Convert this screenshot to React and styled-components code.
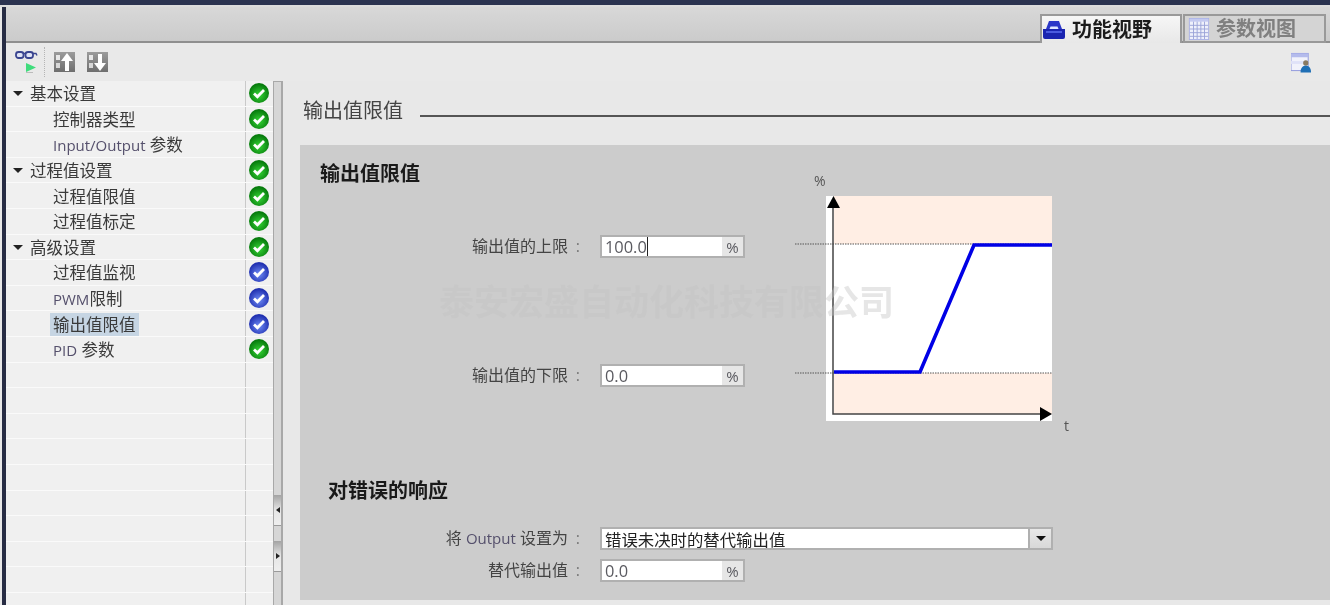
import React from 'react';
import styled, { createGlobalStyle } from 'styled-components';

const CJK = '"Open Sans", "Noto Sans CJK SC", sans-serif';

const GlobalStyle = createGlobalStyle`
  html, body {
    margin: 0;
    padding: 0;
    background: #e8e8e8;
    overflow: hidden;
  }
`;

const Root = styled.div`
  position: relative;
  width: 1330px;
  height: 605px;
  overflow: hidden;
  display: flex;
  flex-direction: column;
  background: #e8e8e8;
  font-family: ${CJK};
  color: #3a3a3a;
  filter: blur(0.4px);
`;

const TopBar = styled.div`
  height: 5px;
  flex: none;
  background: #2b3350;
  border-bottom: 2px solid #dcdcdc;
`;

const Frame = styled.div`
  flex: 1;
  min-height: 0;
  display: flex;
  flex-direction: column;
  margin-left: 2px;
  border-left: 4px solid #272c44;
`;

const TabStrip = styled.div`
  height: 36px;
  flex: none;
  box-sizing: border-box;
  display: flex;
  justify-content: flex-end;
  align-items: flex-end;
  padding-right: 4px;
  gap: 1px;
  background: linear-gradient(#d8d8d8, #cbcbcb);
  border-bottom: 2px solid #8f8f8f;
`;

const Tab = styled.div`
  width: ${(p) => (p.$active ? 142 : 143)}px;
  height: 29px;
  box-sizing: border-box;
  display: flex;
  align-items: center;
  gap: 6px;
  padding-left: ${(p) => (p.$active ? 1 : 3)}px;
  margin-bottom: -2px;
  border: 2px solid #999;
  border-bottom: ${(p) => (p.$active ? 'none' : '2px solid #999')};
  background: ${(p) => (p.$active ? 'linear-gradient(#f6f6f6, #e8e8e8)' : '#d4d4d4')};
  color: ${(p) => (p.$active ? '#1c1c1c' : '#808080')};
  font-size: 20px;
  font-weight: 700;
  line-height: 24px;
`;

const Toolbar = styled.div`
  height: 38px;
  flex: none;
  display: flex;
  align-items: center;
  padding: 0 18px 0 9px;
  background: #e9e9e9;
`;

const ToolSeparator = styled.div`
  width: 0;
  height: 30px;
  margin: 0 9px 0 6px;
  border-left: 1px dotted #b5b5b5;
`;

const ToolGap = styled.div`
  width: ${(p) => p.$width}px;
`;

const ToolSpacer = styled.div`
  flex: 1;
`;

const Body = styled.div`
  flex: 1;
  min-height: 0;
  display: flex;
`;

const NavList = styled.div`
  width: 267px;
  flex: none;
  overflow: hidden;
`;

const NavRow = styled.div`
  height: 25.6px;
  box-sizing: border-box;
  display: flex;
  align-items: center;
  background: #f0f0f0;
  border-bottom: 1.5px solid #fafafa;
`;

const NavLabel = styled.div`
  width: 240px;
  height: 100%;
  box-sizing: border-box;
  flex: none;
  display: flex;
  align-items: center;
  padding-top: 1px;
  padding-left: ${(p) => (p.$child ? 47 : 7)}px;
  border-right: 1px solid #c9c9c9;
  font-size: 16.5px;
  white-space: pre;
`;

const NavText = styled.span`
  padding: 0 3px;
  margin-left: -3px;
  line-height: 23px;
  background: ${(p) => (p.$selected ? '#c6d5e3' : 'transparent')};
`;

const Latin = styled.span`
  color: #55506c;
  font-size: 15px;
`;

const Caret = styled.span`
  width: 0;
  height: 0;
  margin-right: 7px;
  border-left: 5px solid transparent;
  border-right: 5px solid transparent;
  border-top: 5px solid #222;
`;

const StatusCell = styled.div`
  flex: 1;
  display: flex;
  justify-content: center;
  margin-left: -2px;
`;

const Splitter = styled.div`
  width: 10px;
  height: 100%;
  flex: none;
  box-sizing: border-box;
  display: flex;
  flex-direction: column;
  gap: 15px;
  padding-top: 413px;
  background: #d6d6d6;
  border-top: 1px solid #a8a8a8;
  border-left: 1px solid #a8a8a8;
  border-right: 2px solid #a8a8a8;
`;

const SplitButton = styled.div`
  height: 31px;
  box-sizing: border-box;
  display: flex;
  align-items: center;
  justify-content: center;
  background: linear-gradient(#a3a3a3, #e6e6e6 50%, #eeeeee);
  border-bottom: 1px solid #9a9a9a;
`;

const SplitArrow = styled.span`
  width: 0;
  height: 0;
  border-top: 3.5px solid transparent;
  border-bottom: 3.5px solid transparent;
  ${(p) => (p.$left ? 'border-right: 4px solid #222;' : 'border-left: 4px solid #222;')}
`;

const Content = styled.div`
  flex: 1;
  min-width: 0;
  padding: 16px 0 0 17px;
`;

const TitleRow = styled.div`
  display: flex;
  align-items: center;
  height: 28px;
  margin-bottom: 20px;
  margin-left: 3px;
`;

const PageTitle = styled.div`
  font-size: 20px;
  line-height: 28px;
  color: #444;
`;

const TitleRule = styled.div`
  flex: 1;
  height: 2px;
  margin: 10px 0 0 17px;
  background: #555;
`;

const Panel = styled.div`
  height: 455px;
  box-sizing: border-box;
  padding-top: 16px;
  background: #cccccc;
`;

const UpperSection = styled.div`
  display: flex;
  height: 317px;
`;

const FormColumn = styled.div`
  width: 485px;
  flex: none;
`;

const Heading = styled.div`
  margin-left: ${(p) => p.$left}px;
  font-size: 20px;
  font-weight: 700;
  line-height: 26px;
  color: #1a1a1a;
`;

const FieldRow = styled.div`
  display: grid;
  grid-template-columns: 283px auto;
  column-gap: 17px;
  align-items: center;
  margin-top: ${(p) => p.$top}px;
`;

const FieldLabel = styled.div`
  text-align: right;
  font-size: 16px;
  line-height: 23px;
  white-space: pre;
  color: #444;
`;

const Colon = styled.span`
  display: inline-block;
  width: 15px;
  box-sizing: border-box;
  padding-right: 3px;
  text-align: right;
  color: #777;
`;

const InputBox = styled.div`
  width: ${(p) => p.$width}px;
  height: 23px;
  box-sizing: border-box;
  display: flex;
  align-items: stretch;
  background: #fff;
  border: 2px solid #b0b0b0;
  font-size: 16.4px;
  color: #5a5a60;
`;

const InputValue = styled.div`
  flex: 1;
  display: flex;
  align-items: center;
  padding-left: 3px;
  white-space: pre;
  color: ${(p) => (p.$dark ? '#222' : 'inherit')};
`;

const TextCaret = styled.span`
  width: 1px;
  height: 19px;
  background: #222;
`;

const Unit = styled.div`
  width: 21px;
  display: flex;
  align-items: center;
  justify-content: center;
  background: #e6e6e6;
  font-size: 15px;
`;

const DropButton = styled.div`
  width: 21px;
  display: flex;
  align-items: center;
  justify-content: center;
  background: linear-gradient(#e8e8e8, #d8d8d8);
  border-left: 2px solid #b0b0b0;
`;

const DropArrow = styled.span`
  width: 0;
  height: 0;
  border-left: 5px solid transparent;
  border-right: 5px solid transparent;
  border-top: 5px solid #111;
`;

const Chart = styled.svg`
  display: block;
  flex: none;
  margin-top: 9px;
`;

const Watermark = styled.div`
  position: absolute;
  left: 439px;
  top: 278px;
  font-size: 35px;
  line-height: 48px;
  font-weight: 700;
  white-space: nowrap;
  color: rgba(196, 196, 196, 0.42);
  pointer-events: none;
`;

const StatusIcon = ({ kind }) => {
  const id = `status-${kind}`;
  const colors = kind === 'green' ? ['#36d636', '#067a0c'] : ['#6f8cf5', '#1f2fb0'];
  return (
    <svg width="22" height="22" viewBox="0 0 22 22">
      <defs>
        <radialGradient id={id} cx="0.5" cy="0.6" r="0.55">
          <stop offset="0" stopColor={colors[0]} />
          <stop offset="1" stopColor={colors[1]} />
        </radialGradient>
      </defs>
      <circle cx="11" cy="11" r="10" fill={`url(#${id})`} />
      <path d="M6 11.5l3.4 3.2L16 8" fill="none" stroke="#fff" strokeWidth="2.8" />
    </svg>
  );
};

const GlassesIcon = () => (
  <svg width="23" height="25" viewBox="0 0 23 25">
    <rect x="1" y="2" width="7.500" height="6" rx="2.500" fill="#dfe3f5" stroke="#3a4590" strokeWidth="1.800" />
    <rect x="10.500" y="2" width="7.500" height="6" rx="2.500" fill="#dfe3f5" stroke="#3a4590" strokeWidth="1.800" />
    <path d="M8.500 3.500h2M18 3.500h3l1 2" fill="none" stroke="#3a4590" strokeWidth="1.400" />
    <path d="M11 13l10 4.500-10 4.500z" fill="#3fdc7c" />
    <path d="M11 22.500h7" stroke="#bbb" strokeWidth="1" />
  </svg>
);

const MoveIcon = ({ down }) => (
  <svg width="22" height="21" viewBox="0 0 22 21">
    <defs>
      <linearGradient id="move-fill" x1="0" y1="0" x2="0" y2="1">
        <stop offset="0" stopColor="#9c9c9c" />
        <stop offset="1" stopColor="#6e6e6e" />
      </linearGradient>
    </defs>
    <rect x="0" y="0" width="21" height="20" fill="url(#move-fill)" />
    <rect x="2" y="3" width="4" height="5" fill="#e8e8e8" />
    <rect x="2" y="11" width="4" height="5" fill="#d8d8d8" />
    {down ? (
      <path d="M11 2h4v9h4l-6 8-6-8h4z" fill="#fff" />
    ) : (
      <path d="M13 1l6 8h-4v10h-4V9H7z" fill="#fff" />
    )}
  </svg>
);

const TableIcon = () => (
  <svg width="21" height="21" viewBox="0 0 22 21">
    <rect x="0" y="1" width="18" height="18" fill="#f1f2fb" stroke="#8e97dc" />
    <rect x="0" y="1" width="18" height="4" fill="#b4bbec" />
    <rect x="0" y="9" width="18" height="3" fill="#dfe2f8" />
    <circle cx="15.500" cy="11" r="2.800" fill="#8a7a62" />
    <path d="M10 21c0-5 2.500-7 5.500-7s5.500 2 5.500 7z" fill="#1f6fb5" />
  </svg>
);

const FunctionIcon = () => (
  <svg width="23" height="18" viewBox="0 0 23 18">
    <path d="M6 0h10l3 8H3z" fill="#2b37c8" />
    <path d="M7.500 5.500h7l1 2.500h-9z" fill="#dfe6ff" />
    <path d="M0 8h22v8q0 2-2 2H2q-2 0-2-2z" fill="#1a24b0" />
    <path d="M3 10h16v2H3z" fill="#4a5ae0" />
  </svg>
);

const ParamIcon = () => (
  <svg width="22" height="22" viewBox="0 0 22 24">
    <rect x="0.500" y="0.500" width="21" height="23" fill="#eef0fb" stroke="#aab2e6" />
    <rect x="1" y="1" width="20" height="3" fill="#c3c9f0" />
    <path d="M5 4v19M9 4v19M13 4v19M17 4v19M1 8h20M1 12h20M1 16h20M1 20h20" stroke="#9aa3d8" strokeWidth="1" fill="none" />
  </svg>
);

// drawn in page coordinates, the viewBox starts at the chart's page position
const LimitChart = () => (
  <Chart width="295" height="265" viewBox="785 170 295 265">
    <text x="814" y="186" fontSize="14" fill="#555" fontFamily='"Open Sans", sans-serif'>%</text>
    <rect x="826" y="196" width="226" height="225" fill="#fff" />
    <rect x="834" y="196" width="218" height="48" fill="#ffeee4" />
    <rect x="834" y="373" width="218" height="41" fill="#ffeee4" />
    <path d="M795 244h257M795 373h257" stroke="#555" strokeWidth="1" strokeDasharray="1.500 1" fill="none" />
    <path d="M834 372h86l54-127h78" stroke="#0000e6" strokeWidth="3.600" fill="none" />
    <path d="M833 204v210h210" stroke="#444" strokeWidth="1.500" fill="none" />
    <path d="M827 208l6.500-12 6.500 12z" fill="#000" />
    <path d="M1040 407l12 7-12 7z" fill="#000" />
    <text x="1064" y="431" fontSize="14" fill="#555" fontFamily='"Open Sans", sans-serif'>t</text>
  </Chart>
);

const navItems = [
  { label: '基本设置', status: 'green' },
  { label: '控制器类型', child: true, status: 'green' },
  { latin: 'Input/Output', label: ' 参数', child: true, status: 'green' },
  { label: '过程值设置', status: 'green' },
  { label: '过程值限值', child: true, status: 'green' },
  { label: '过程值标定', child: true, status: 'green' },
  { label: '高级设置', status: 'green' },
  { label: '过程值监视', child: true, status: 'blue' },
  { latin: 'PWM', label: '限制', child: true, status: 'blue' },
  { label: '输出值限值', child: true, status: 'blue', selected: true },
  { latin: 'PID', label: ' 参数', child: true, status: 'green' },
  ...Array.from({ length: 10 }, () => ({ label: '' })),
];

const App = () => (
  <Root>
    <GlobalStyle />
    <TopBar />
    <Frame>
      <TabStrip>
        <Tab $active>
          <FunctionIcon />
          功能视野
        </Tab>
        <Tab>
          <ParamIcon />
          参数视图
        </Tab>
      </TabStrip>

      <Toolbar>
        <GlassesIcon />
        <ToolSeparator />
        <MoveIcon />
        <ToolGap $width={11} />
        <MoveIcon down />
        <ToolSpacer />
        <TableIcon />
      </Toolbar>

      <Body>
        <NavList>
          {navItems.map((item, i) => (
            <NavRow key={i}>
              <NavLabel $child={item.child}>
                {item.label && !item.child && <Caret />}
                <NavText $selected={item.selected}>
                  {item.latin && <Latin>{item.latin}</Latin>}
                  {item.label}
                </NavText>
              </NavLabel>
              <StatusCell>{item.status && <StatusIcon kind={item.status} />}</StatusCell>
            </NavRow>
          ))}
        </NavList>

        <Splitter>
          <SplitButton>
            <SplitArrow $left />
          </SplitButton>
          <SplitButton>
            <SplitArrow />
          </SplitButton>
        </Splitter>

        <Content>
          <TitleRow>
            <PageTitle>输出值限值</PageTitle>
            <TitleRule />
          </TitleRow>

          <Panel>
            <UpperSection>
              <FormColumn>
                <Heading $left={20}>输出值限值</Heading>
                <FieldRow $top={48}>
                  <FieldLabel>输出值的上限<Colon>:</Colon></FieldLabel>
                  <InputBox $width={145}>
                    <InputValue>
                      100.0
                      <TextCaret />
                    </InputValue>
                    <Unit>%</Unit>
                  </InputBox>
                </FieldRow>
                <FieldRow $top={106}>
                  <FieldLabel>输出值的下限<Colon>:</Colon></FieldLabel>
                  <InputBox $width={145}>
                    <InputValue>0.0</InputValue>
                    <Unit>%</Unit>
                  </InputBox>
                </FieldRow>
              </FormColumn>
              <LimitChart />
            </UpperSection>

            <Heading $left={28}>对错误的响应</Heading>
            <FieldRow $top={23}>
              <FieldLabel>
                将 <Latin>Output</Latin> 设置为<Colon>:</Colon>
              </FieldLabel>
              <InputBox $width={453}>
                <InputValue $dark>错误未决时的替代输出值</InputValue>
                <DropButton>
                  <DropArrow />
                </DropButton>
              </InputBox>
            </FieldRow>
            <FieldRow $top={9}>
              <FieldLabel>替代输出值<Colon>:</Colon></FieldLabel>
              <InputBox $width={145}>
                <InputValue>0.0</InputValue>
                <Unit>%</Unit>
              </InputBox>
            </FieldRow>
          </Panel>
        </Content>
      </Body>
    </Frame>
    <Watermark>泰安宏盛自动化科技有限公司</Watermark>
  </Root>
);

export default App;
